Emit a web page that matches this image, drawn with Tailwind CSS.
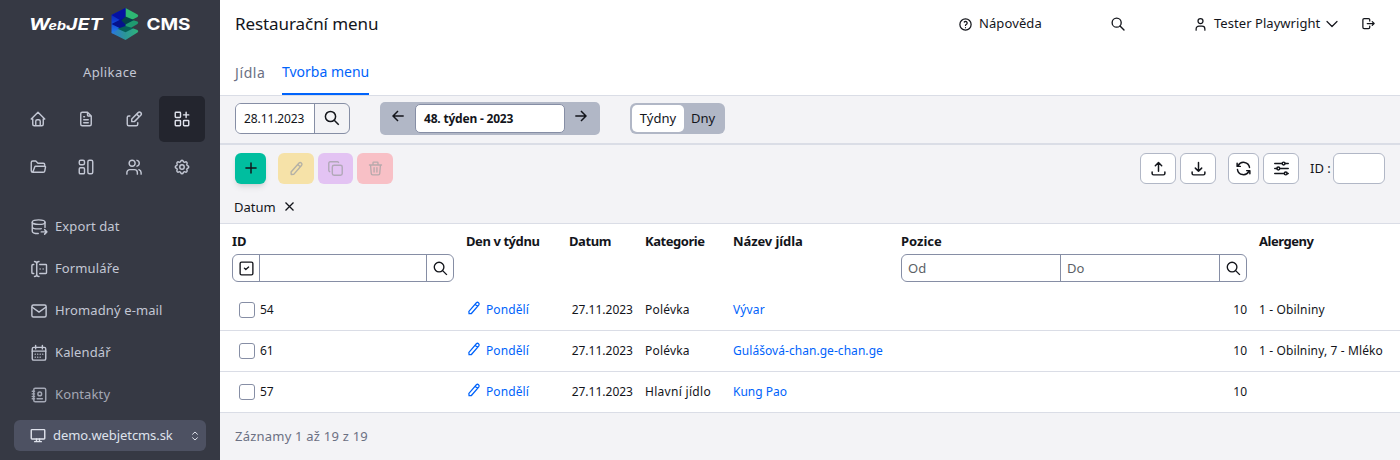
<!DOCTYPE html>
<html lang="cs">
<head>
<meta charset="utf-8">
<title>Restaurační menu</title>
<script src="https://cdn.jsdelivr.net/npm/@tailwindcss/browser@4"></script>
</head>
<body class="w-[1400px] h-[460px] overflow-hidden flex bg-white font-['Noto_Sans',sans-serif] text-[13px] text-[#13151b]">
<svg class="hidden">
  <defs>
    <symbol id="search" viewBox="0 0 24 24"><circle cx="10" cy="10" r="6.800"/><path d="M21 21l-6-6"/></symbol>
    <symbol id="pencil" viewBox="0 0 24 24"><path d="M4 20h3.500L19.600 7.900a2.500 2.500 0 0 0-3.500-3.500L4 16.500zM14 6.500L17.500 10" transform="rotate(-4 12 12)"/></symbol>
  </defs>
</svg>

<!-- Sidebar -->
<aside class="w-[220px] h-full shrink-0 bg-[#363944] text-[#c3c7d4] flex flex-col">
  <div class="h-[48px] shrink-0">
    <svg class="w-[220px] h-[48px]" viewBox="0 0 220 48" fill="#fff" font-family="Inter, sans-serif" font-weight="700">
      <text x="29" y="30" font-size="16.5" font-style="italic" textLength="21" lengthAdjust="spacingAndGlyphs">W</text>
      <text x="48.500" y="30" font-size="11.500" font-style="italic" textLength="17.500" lengthAdjust="spacingAndGlyphs">eb</text>
      <text x="66" y="30" font-size="16.500" font-style="italic" textLength="36.500" lengthAdjust="spacingAndGlyphs">JET</text>
      <text x="146.500" y="30" font-size="16.500" textLength="44" lengthAdjust="spacingAndGlyphs">CMS</text>
      <linearGradient id="lf" x1="0" y1="0" x2="0" y2="1"><stop offset="0" stop-color="#0a18a0"/><stop offset=".45" stop-color="#0f3cd0"/><stop offset="1" stop-color="#2a8ef0"/></linearGradient>
      <linearGradient id="bt" x1="0" y1="0" x2="1" y2="0"><stop offset="0" stop-color="#2c78d8"/><stop offset=".5" stop-color="#2c9498"/><stop offset="1" stop-color="#2eb47a"/></linearGradient>
      <path d="M111.500 15L125.500 8v28l-14-3z" fill="url(#lf)"/>
      <path d="M111.500 33l14-7.500 12 4.500q1.500 1 0 2.500L125.500 40z" fill="url(#bt)"/>
      <path d="M125.500 18l12 3.500q1.500 1 0 2.500l-12 7z" fill="#1f9a70"/>
      <path d="M125.500 8l12 6.500q1.500 1 0 2.500l-12 6z" fill="#2eb873"/>
      <path d="M111.500 15l14-7v15.500z" fill="#0511a2"/>
      <path d="M111.500 24l14-7v14z" fill="#05128c"/>
      <path d="M125.500 16.500l8.500 3.500-8.500 4.500-4-4z" fill="#04414a"/>
      <path d="M125.500 26l8 2.200-8 4-8-3.500z" fill="#056058"/>
    </svg>
  </div>
  <div class="h-[48px] shrink-0 flex items-center justify-center tracking-[0.4px] pt-[2px]">Aplikace</div>
  <div class="grid grid-cols-4 gap-[2px] px-[15px] shrink-0 [&>div]:h-[46px] [&>div]:rounded-[5px] [&>div]:flex [&>div]:items-center [&>div]:justify-center [&_svg]:size-[18px] [&_svg]:fill-none [&_svg]:stroke-current [&_svg]:stroke-[1.9] [&_svg]:[stroke-linecap:round] [&_svg]:[stroke-linejoin:round]">
    <div><svg viewBox="0 0 24 24"><path d="M5 12H3l9-9 9 9h-2M5 12v7a2 2 0 0 0 2 2h10a2 2 0 0 0 2-2v-7M9 21v-6a2 2 0 0 1 2-2h2a2 2 0 0 1 2 2v6"/></svg></div>
    <div><svg viewBox="0 0 24 24"><path d="M14 3v4a1 1 0 0 0 1 1h4M17 21H7a2 2 0 0 1-2-2V5a2 2 0 0 1 2-2h7l5 5v11a2 2 0 0 1-2 2zM9 9h1M9 13h6M9 17h6"/></svg></div>
    <div><svg viewBox="0 0 24 24"><path d="M6.500 8H5a2 2 0 0 0-2 2v9a2 2 0 0 0 2 2h10a2 2 0 0 0 2-2v-2M9 15.500h3.500L21 7a2.300 2.300 0 0 0-3.500-3.500L9 12zM15.500 5.500L19 9"/></svg></div>
    <div class="bg-[#23252e] text-[#dfe2ec]"><svg viewBox="0 0 24 24"><path d="M4 3h5a1 1 0 0 1 1 1v5a1 1 0 0 1-1 1H4a1 1 0 0 1-1-1V4a1 1 0 0 1 1-1zM4 14h5a1 1 0 0 1 1 1v5a1 1 0 0 1-1 1H4a1 1 0 0 1-1-1v-5a1 1 0 0 1 1-1zM15 14h5a1 1 0 0 1 1 1v5a1 1 0 0 1-1 1h-5a1 1 0 0 1-1-1v-5a1 1 0 0 1 1-1zM14 6.500h7M17.500 3v7"/></svg></div>
    <div><svg viewBox="0 0 24 24"><path d="M5 19l2.757-7.351A1 1 0 0 1 8.693 11H21a1 1 0 0 1 .986 1.164l-.996 5.211A2 2 0 0 1 19.026 19H5a2 2 0 0 1-2-2V6a2 2 0 0 1 2-2h4l3 3h7a2 2 0 0 1 2 2v2"/></svg></div>
    <div><svg viewBox="0 0 24 24"><rect x="3" y="3" width="7" height="6" rx="2"/><rect x="3" y="13" width="7" height="8" rx="1.500"/><rect x="14.500" y="3" width="6.500" height="18" rx="2"/></svg></div>
    <div><svg viewBox="0 0 24 24"><circle cx="9.500" cy="7" r="4"/><path d="M2.500 21.500v-2a4 4 0 0 1 4-4h6a4 4 0 0 1 4 4v2M16 3.130a4 4 0 0 1 0 7.750M21.500 21.500v-2a4.500 4.500 0 0 0-3-4"/></svg></div>
    <div><svg viewBox="0 0 24 24"><path d="M10.325 4.317c.426-1.756 2.924-1.756 3.350 0a1.724 1.724 0 0 0 2.573 1.066c1.543-.94 3.310.826 2.370 2.370a1.724 1.724 0 0 0 1.065 2.572c1.756.426 1.756 2.924 0 3.350a1.724 1.724 0 0 0-1.066 2.573c.94 1.543-.826 3.310-2.370 2.370a1.724 1.724 0 0 0-2.572 1.065c-.426 1.756-2.924 1.756-3.350 0a1.724 1.724 0 0 0-2.573-1.066c-1.543.94-3.310-.826-2.370-2.370a1.724 1.724 0 0 0-1.065-2.572c-1.756-.426-1.756-2.924 0-3.350a1.724 1.724 0 0 0 1.066-2.573c-.94-1.543.826-3.310 2.370-2.370 1 .608 2.296.07 2.572-1.065z"/><circle cx="12" cy="12" r="3"/></svg></div>
  </div>
  <nav class="mt-[15px] pl-[30px] shrink-0 h-[210px] tracking-[0.12px] [&>div]:h-[42px] [&>div]:flex [&>div]:items-center [&>div]:gap-[7px] [&>div]:pt-[1px] [&_svg]:size-[18px] [&_svg]:fill-none [&_svg]:stroke-current [&_svg]:stroke-[1.9] [&_svg]:[stroke-linecap:round] [&_svg]:[stroke-linejoin:round]">
    <div><svg viewBox="0 0 24 24"><ellipse cx="11.500" cy="5.500" rx="8.500" ry="3"/><path d="M3 5.500v12c0 1.700 3.500 3.200 8 3.200M20 5.500v7M3 11.500c0 1.700 3.500 3 8.500 3 1.500 0 2.500 0 3.500-.3M15 18.500h7M19.500 15.500l3 3-3 3"/></svg>Export dat</div>
    <div><svg viewBox="0 0 24 24"><path d="M12 2a3 3 0 0 0-3 3v14a3 3 0 0 0 3 3M6 2a3 3 0 0 1 3 3v14a3 3 0 0 1-3 3M13 6h8a1 1 0 0 1 1 1v10a1 1 0 0 1-1 1h-8M5 6H4a1.500 1.500 0 0 0-1.500 1.500v9A1.500 1.500 0 0 0 4 18h1M17.500 12h.01M13.500 12h.01"/></svg>Formuláře</div>
    <div><svg viewBox="0 0 24 24"><rect x="2.500" y="4" width="19" height="16" rx="2"/><path d="M3 7l9 6.500L21 7"/></svg>Hromadný e-mail</div>
    <div><svg viewBox="0 0 24 24"><rect x="3" y="4.500" width="18" height="17" rx="2"/><path d="M7.500 2v4.500M16.500 2v4.500M3 9.500h18M7 13.500h.01M10.300 13.500h.01M13.600 13.500h.01M17 13.500h.01M7 17.500h.01M10.300 17.500h.01M13.600 17.500h.01"/></svg>Kalendář</div>
    <div class="text-[#a4a8b5]"><svg viewBox="0 0 24 24"><rect x="5" y="3" width="16" height="18" rx="2"/><path d="M9.500 17h7M3 7h3M3 10.500h3M3 14h3M3 17h3"/><circle cx="13" cy="10.500" r="2.500"/></svg>Kontakty</div>
  </nav>
  <div class="mt-[5px] ml-[14px] w-[192px] h-[31px] rounded-[6px] bg-[#4d5162] text-[#dfe2ec] flex items-center pl-[15px] pr-[7px]">
    <svg class="size-[18px] fill-none stroke-current stroke-[1.9]" viewBox="0 0 24 24" stroke-linecap="round" stroke-linejoin="round"><rect x="3" y="3.500" width="18" height="12.500" rx="1"/><path d="M7.500 19.500h9M10 16v3.500M14 16v3.500"/></svg>
    <span class="ml-[6px] text-[13px] tracking-[-0.08px]">demo.webjetcms.sk</span>
    <svg class="ml-auto w-[8px] h-[10px] fill-none stroke-current" viewBox="0 0 8 10"><path d="M1.300 3.500L4 1l2.700 2.500M1.300 6.500L4 9l2.700-2.500"/></svg>
  </div>
</aside>

<main class="flex-1 min-w-0 h-full flex flex-col">
  <!-- Header -->
  <header class="h-[48px] shrink-0 pl-[15px] flex items-center [&_svg]:fill-none [&_svg]:stroke-current [&_svg]:stroke-[2] [&_svg]:[stroke-linecap:round] [&_svg]:[stroke-linejoin:round]">
    <h1 class="text-[17px] w-[722px] tracking-[-0.08px]">Restaurační menu</h1>
    <div class="w-[153px] flex items-center gap-[6px] pl-[1px] tracking-[0.1px]"><svg class="size-[15px]" viewBox="0 0 24 24"><circle cx="12" cy="12" r="9"/><path d="M12 17v.01M12 13.500a1.500 1.500 0 0 1 1-1.500 2.600 2.600 0 1 0-3-4"/></svg>Nápověda</div>
    <div class="w-[83px] pb-[1px]"><svg class="size-[16px]" viewBox="0 0 24 24"><use href="#search"/></svg></div>
    <div class="w-[168px] flex items-center"><svg class="size-[15px]" viewBox="0 0 24 24"><circle cx="12" cy="6.500" r="4"/><path d="M5 21v-2a4.500 4.500 0 0 1 4.500-4.500h5a4.500 4.500 0 0 1 4.500 4.500v2"/></svg><span class="ml-[6px] w-[110px] whitespace-nowrap tracking-[0.05px]">Tester Playwright</span><svg class="ml-[2px] w-[12px] h-[8px] stroke-[1.2]!" viewBox="0 0 12 8"><path d="M1 1.500l5 5 5-5"/></svg></div>
    <svg class="size-[15px] mb-[1px]" viewBox="0 0 24 24"><path d="M14 8V6a2 2 0 0 0-2-2H5a2 2 0 0 0-2 2v12a2 2 0 0 0 2 2h7a2 2 0 0 0 2-2v-2M10 12h11M18 9l3 3-3 3"/></svg>
  </header>
  <div class="h-[48px] shrink-0 pl-[15px] flex gap-[16px] text-[14px] border-b border-[#dadde6]">
    <div class="h-[47px] w-[31px] pt-[2px] flex items-center text-[#6b7083] tracking-[0.6px]">Jídla</div>
    <div class="h-[47px] w-[87px] pt-[2px] flex items-center border-b-2 border-[#0063fb] text-[#0063fb] whitespace-nowrap">Tvorba menu</div>
  </div>

  <!-- Week selection -->
  <div class="h-[49px] shrink-0 bg-[#f3f3f6] border-b-2 border-[#dadde6] pl-[15px] flex">
    <div class="mt-[7px] w-[115px] h-[31px] rounded-[6px] border border-[#868ea5] flex overflow-hidden">
      <div class="w-[79px] bg-white border-r border-[#868ea5] pl-[8px] flex items-center text-[12px] tracking-[-0.1px]">28.11.2023</div>
      <div class="flex-1 flex items-center justify-center"><svg class="size-[18px] mb-[1px] fill-none stroke-current stroke-[2]" viewBox="0 0 24 24"><use href="#search"/></svg></div>
    </div>
    <div class="mt-[6px] ml-[30px] w-[220px] h-[33px] rounded-[5px] bg-[#b1b7c6] flex items-center [&>svg]:fill-none [&>svg]:stroke-current [&>svg]:stroke-[1.5] [&>svg]:w-[12px] [&>svg]:h-[12px] [&>svg]:mb-[5px]">
      <svg class="ml-[12px]" viewBox="0 0 12 12"><path d="M11.700 6H1.200M6 1L1 6l5 5"/></svg>
      <div class="ml-[11px] w-[150px] h-[29px] bg-white border border-[#868ea5] rounded-[5px] pl-[8px] flex items-center text-[12px] font-bold tracking-[-0.2px]">48. týden - 2023</div>
      <svg class="ml-[10px]" viewBox="0 0 12 12"><path d="M.300 6h10.500M6 1l5 5-5 5"/></svg>
    </div>
    <div class="mt-[7px] ml-[30px] w-[95px] h-[31px] rounded-[6px] bg-[#b1b7c6] p-[2px] flex items-center">
      <div class="w-[52px] h-[27px] rounded-[5px] bg-white flex items-center justify-center">Týdny</div>
      <div class="w-[38px] flex items-center justify-center">Dny</div>
    </div>
  </div>

  <!-- Toolbar -->
  <div class="h-[78px] shrink-0 bg-[#f3f3f6] pl-[15px] pr-[15px] pt-[8px]">
    <div class="flex items-center h-[31px] [&_svg]:fill-none [&_svg]:stroke-current [&_svg]:[stroke-linecap:round] [&_svg]:[stroke-linejoin:round]">
      <div class="w-[31px] h-[31px] rounded-[6px] bg-[#00be9f] shadow-md flex items-center justify-center pb-[1px]"><svg class="size-[12px] stroke-[1.6]" viewBox="0 0 13 13"><path d="M6.500 1v11M1 6.500h11"/></svg></div>
      <div class="ml-[12px] w-[36px] h-[31px] rounded-[6px] bg-[#f6e2a8] text-[#b4b1a6] flex items-center justify-center"><svg class="size-[17px] stroke-[2]" viewBox="0 0 24 24"><use href="#pencil"/></svg></div>
      <div class="ml-[4px] w-[35px] h-[31px] rounded-[6px] bg-[#e3c3f3] text-[#b1a8b8] flex items-center justify-center"><svg class="size-[17px] stroke-[2]" viewBox="0 0 24 24"><rect x="7.500" y="7.500" width="14" height="14" rx="2.500"/><path d="M3.800 16.500A2 2 0 0 1 2.500 14.600V4.500a2 2 0 0 1 2-2h10a2 2 0 0 1 1.800 1"/></svg></div>
      <div class="ml-[4px] w-[36px] h-[31px] rounded-[6px] bg-[#f8c0c6] text-[#b8a9ac] flex items-center justify-center pb-[1px]"><svg class="size-[17px] stroke-[1.9]" viewBox="0 0 24 24"><path d="M3.500 7h17M10 11v6M14 11v6M5 7l1 12a2 2 0 0 0 2 2h8a2 2 0 0 0 2-2l1-12M8.500 7V4a1 1 0 0 1 1-1h5a1 1 0 0 1 1 1v3"/></svg></div>
      <div class="ml-auto flex items-center [&>div]:h-[31px] [&>div]:rounded-[6px] [&>div]:bg-white [&>div]:border [&>div]:border-[#b1b7c6] [&>div]:flex [&>div]:items-center [&>div]:justify-center [&_svg]:size-[17px] [&_svg]:mb-[1px] [&_svg]:stroke-[2.1]">
        <div class="w-[36px]"><svg viewBox="0 0 24 24"><path d="M3 17v2a2 2 0 0 0 2 2h14a2 2 0 0 0 2-2v-2M7.500 8L12 3.500 16.500 8M12 3.500V16"/></svg></div>
        <div class="ml-[4px] w-[36px]"><svg viewBox="0 0 24 24"><path d="M3 17v2a2 2 0 0 0 2 2h14a2 2 0 0 0 2-2v-2M7.500 11.500L12 16l4.500-4.500M12 3.500V16"/></svg></div>
        <div class="ml-[12px] w-[31px]"><svg viewBox="0 0 24 24"><path d="M20.500 10.500A8.500 8.500 0 0 0 4.500 8M3 4.500V9h4.500M3.500 13.500A8.500 8.500 0 0 0 19.500 16M21 19.500V15h-4.500"/></svg></div>
        <div class="ml-[4px] w-[36px]"><svg viewBox="0 0 24 24"><circle cx="15" cy="5" r="2"/><circle cx="7.500" cy="12" r="2"/><circle cx="18" cy="19" r="2"/><path d="M2.500 5H13M17 5h4.500M2.500 12h3M9.500 12h12M2.500 19H16M20 19h1.500"/></svg></div>
        <span class="ml-[11px] w-[23px] whitespace-nowrap pt-[1px]">ID :</span>
        <div class="w-[52px]"></div>
      </div>
    </div>
    <div class="mt-[12px] ml-[-1px] h-[22px] flex items-center gap-[9px]"><span class="pt-[1px]">Datum</span><svg class="size-[9px] mb-[1px] fill-none stroke-current stroke-[1.3]" viewBox="0 0 9 9"><path d="M.500.500l8 8M8.500.500l-8 8"/></svg></div>
  </div>

  <!-- Table -->
  <section class="border-t border-[#dadde6] bg-white shrink-0">
    <div class="h-[66px] pl-[12px] pt-[7px] grid grid-cols-[234px_103px_76px_88px_168px_358px_1fr] content-start font-bold whitespace-nowrap">
      <div class="leading-[20px]">ID
        <div class="mt-[3px] w-[222px] h-[28px] rounded-[6px] border border-[#868ea5] flex [&_svg]:size-[17px] [&_svg]:fill-none [&_svg]:stroke-current [&_svg]:stroke-[1.9]">
          <div class="w-[27px] border-r border-[#868ea5] flex items-center justify-center"><svg viewBox="0 0 24 24" stroke-linecap="round" stroke-linejoin="round"><rect x="3" y="3" width="18" height="18" rx="2"/><path d="M9 11.500l2 2 4-3.500"/></svg></div>
          <div class="flex-1"></div>
          <div class="w-[27px] border-l border-[#868ea5] flex items-center justify-center"><svg viewBox="0 0 24 24"><use href="#search"/></svg></div>
        </div>
      </div>
      <div class="leading-[20px] tracking-[-0.42px]">Den v týdnu</div>
      <div class="leading-[20px] tracking-[-0.4px]">Datum</div>
      <div class="leading-[20px] tracking-[-0.45px]">Kategorie</div>
      <div class="leading-[20px] tracking-[-0.1px]">Název jídla</div>
      <div class="leading-[20px]">Pozice
        <div class="mt-[3px] w-[346px] h-[28px] rounded-[6px] border border-[#868ea5] flex font-normal text-[#5c5f66]">
          <div class="w-[159px] border-r border-[#868ea5] pl-[6px] flex items-center">Od</div>
          <div class="flex-1 pl-[6px] flex items-center">Do</div>
          <div class="w-[27px] border-l border-[#868ea5] flex items-center justify-center text-[#13151b]"><svg class="size-[17px] fill-none stroke-current stroke-[1.9]" viewBox="0 0 24 24"><use href="#search"/></svg></div>
        </div>
      </div>
      <div class="leading-[20px] tracking-[-0.45px]">Alergeny</div>
    </div>
    <div class="text-[12px] whitespace-nowrap [&>div]:h-[41px] [&>div]:pl-[12px] [&>div]:grid [&>div]:grid-cols-[234px_103px_76px_88px_168px_358px_1fr] [&>div]:items-center [&>div]:border-b [&>div]:border-[#dadde6] [&_svg]:size-[16px] [&_svg]:fill-none [&_svg]:stroke-current [&_svg]:stroke-[1.9]">
      <div><div class="pl-[7px] flex items-center gap-[5px]"><i class="size-[16px] mb-[1px] rounded-[3px] border-[1.5px] border-[#868ea5]"></i>54</div><div class="flex items-center gap-[4px] text-[#0063fb] tracking-[0.08px]"><svg class="mb-[4px]" viewBox="0 0 24 24"><use href="#pencil"/></svg>Pondělí</div><div class="pr-[12px] text-right">27.11.2023</div><div class="tracking-[0.2px]">Polévka</div><div class="text-[#0063fb] tracking-[0.15px]">Vývar</div><div class="pr-[12px] text-right">10</div><div class="tracking-[0.15px]">1 - Obilniny</div></div>
      <div><div class="pl-[7px] flex items-center gap-[5px]"><i class="size-[16px] mb-[1px] rounded-[3px] border-[1.5px] border-[#868ea5]"></i>61</div><div class="flex items-center gap-[4px] text-[#0063fb] tracking-[0.08px]"><svg class="mb-[4px]" viewBox="0 0 24 24"><use href="#pencil"/></svg>Pondělí</div><div class="pr-[12px] text-right">27.11.2023</div><div class="tracking-[0.2px]">Polévka</div><div class="text-[#0063fb] tracking-[0.05px]">Gulášová-chan.ge-chan.ge</div><div class="pr-[12px] text-right">10</div><div class="tracking-[0.12px]">1 - Obilniny, 7 - Mléko</div></div>
      <div><div class="pl-[7px] flex items-center gap-[5px]"><i class="size-[16px] mb-[1px] rounded-[3px] border-[1.5px] border-[#868ea5]"></i>57</div><div class="flex items-center gap-[4px] text-[#0063fb] tracking-[0.08px]"><svg class="mb-[4px]" viewBox="0 0 24 24"><use href="#pencil"/></svg>Pondělí</div><div class="pr-[12px] text-right">27.11.2023</div><div class="tracking-[0.3px]">Hlavní jídlo</div><div class="text-[#0063fb]">Kung Pao</div><div class="pr-[12px] text-right">10</div><div></div></div>
    </div>
  </section>
  <footer class="flex-1 bg-[#f3f3f6] pl-[15px] flex items-center text-[#6b7083] tracking-[0.22px]">Záznamy 1 až 19 z 19</footer>
</main>
</body>
</html>
